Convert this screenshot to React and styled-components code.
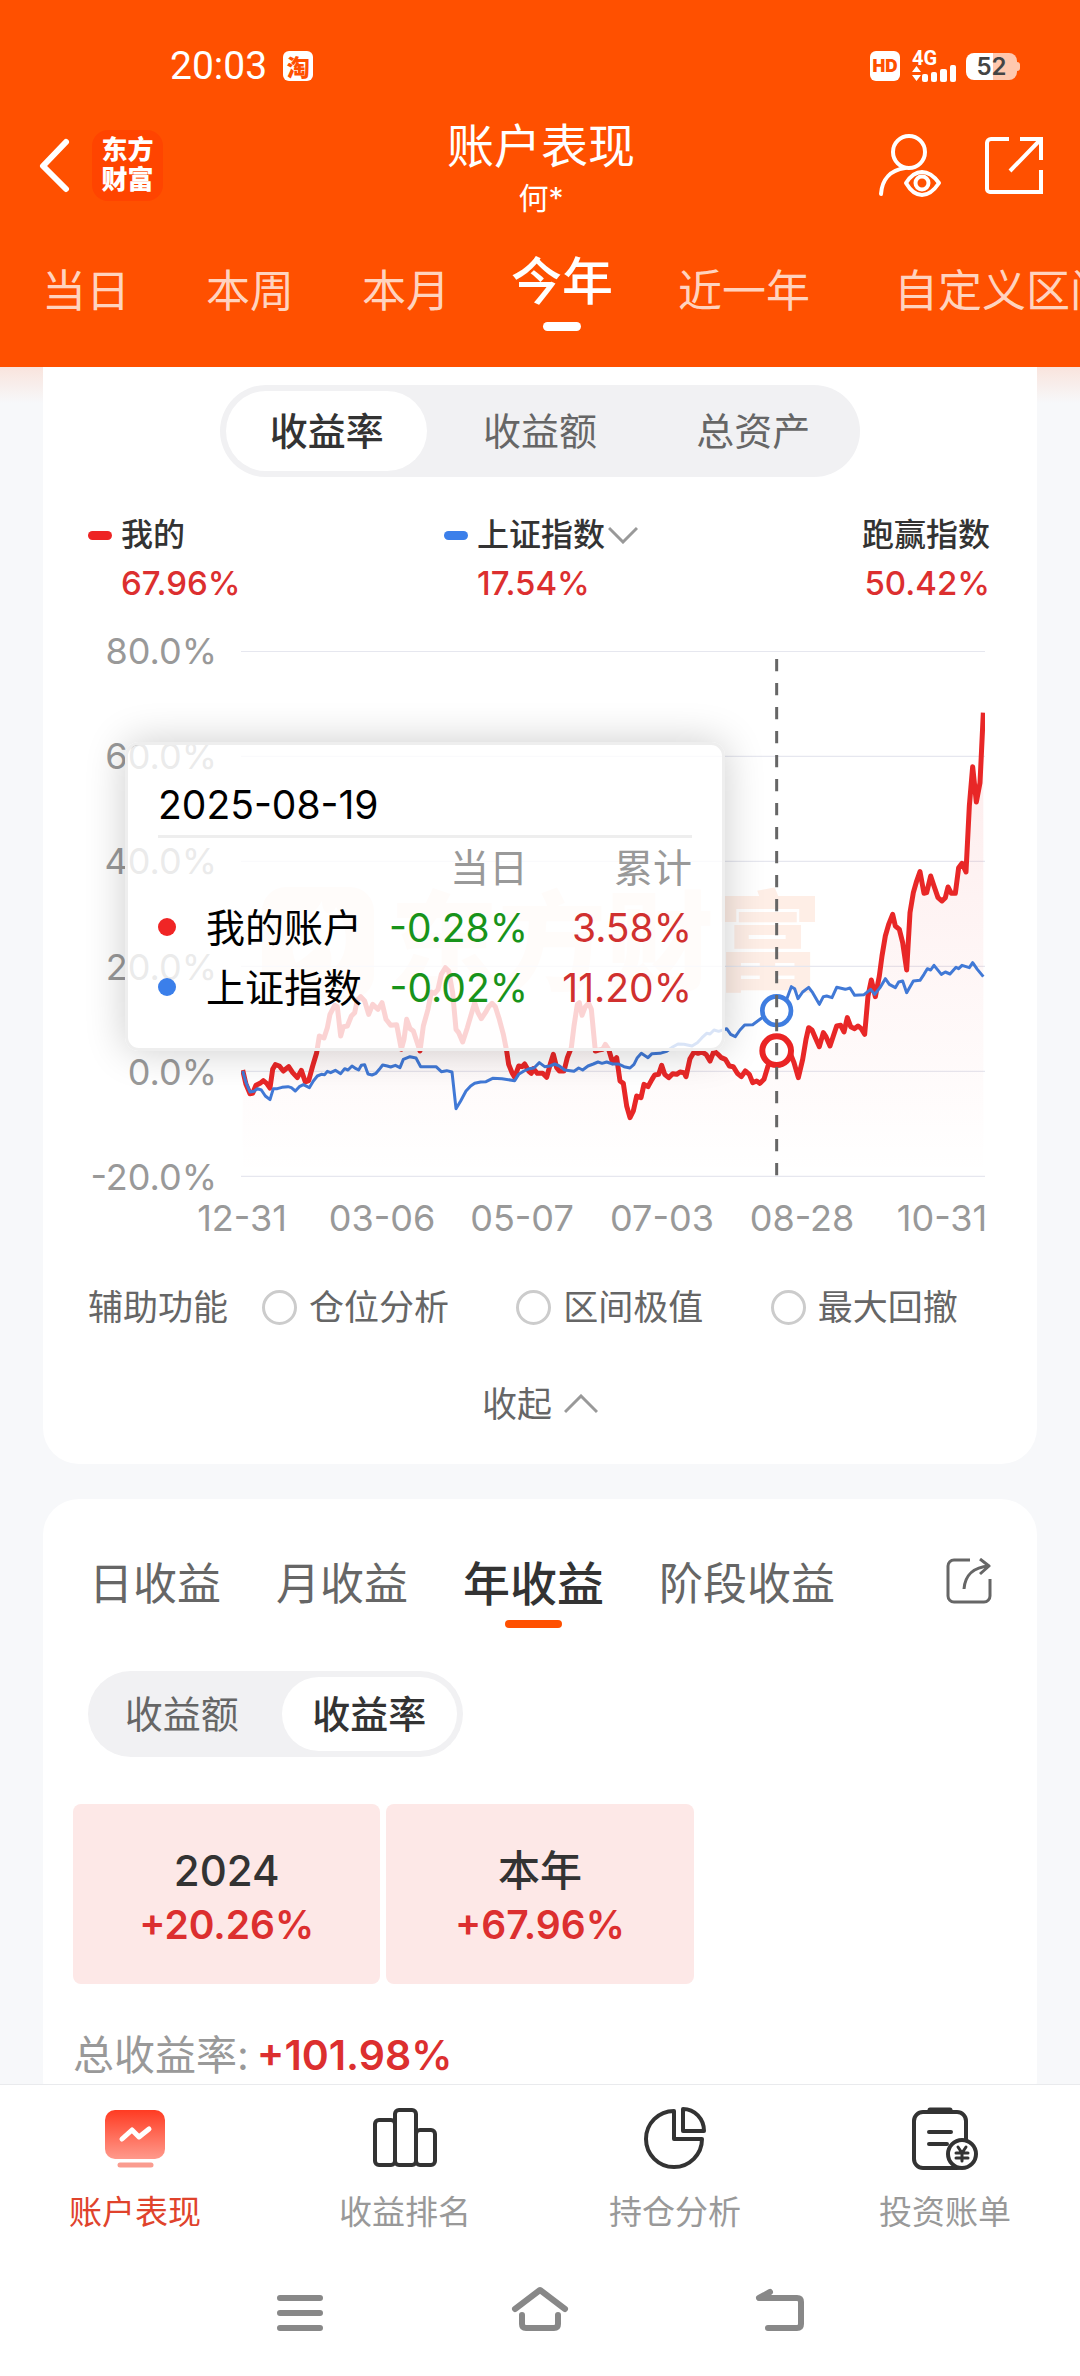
import { useState } from "react";
import styled, { createGlobalStyle } from "styled-components";

const RANGES = [
  { label: "当日", width: 172 },
  { label: "本周", width: 156 },
  { label: "本月", width: 156 },
  { label: "今年", width: 156 },
  { label: "近一年", width: 208 },
  { label: "自定义区间", width: 312 },
];

const Y_LABELS = ["80.0%", "60.0%", "40.0%", "20.0%", "0.0%", "-20.0%"];
const X_LABELS = ["12-31", "03-06", "05-07", "07-03", "08-28", "10-31"];
const HELPERS = ["仓位分析", "区间极值", "最大回撤"];
const PERIODS = ["日收益", "月收益", "年收益", "阶段收益"];
const YEARS = [
  { name: "2024", value: "+20.26%" },
  { name: "本年", value: "+67.96%" },
];

// chart units: three per pixel, 315 per 20%
const CHART_W = 2232;
const CHART_H = 1578;

const shift = (points, dx, dy) => points.map(([x, y]) => [x + dx, y + dy]);

const MINE_H1 = [
  [68, 452], [78, 495], [90, 523], [98, 522], [108, 498], [120, 492], [130, 484],
  [140, 492], [150, 506], [158, 450], [166, 436], [178, 440], [190, 455], [206, 442],
  [218, 460], [232, 475], [244, 453], [256, 488], [266, 484], [278, 440], [290, 400],
  [298, 350], [312, 356], [322, 325], [330, 285], [344, 258], [352, 262], [362, 350],
  [370, 322], [382, 320], [394, 290], [404, 280], [412, 242], [422, 232], [434, 245],
  [446, 285], [458, 255], [474, 270], [486, 250], [498, 300], [512, 318], [530, 316],
  [544, 390], [552, 360], [560, 300], [570, 328], [580, 335], [600, 395], [610, 320],
  [624, 270], [634, 218], [644, 222], [654, 210], [664, 165], [676, 145], [686, 155],
  [698, 220], [708, 330], [716, 340], [728, 368], [742, 325], [764, 250], [774, 280],
  [784, 298], [796, 280], [806, 262], [816, 252], [826, 262], [838, 300], [850, 345],
  [860, 395], [866, 435], [876, 460], [884, 474], [896, 440], [906, 442], [914, 434],
  [926, 455], [934, 462], [940, 448], [952, 462], [968, 462], [980, 474], [992, 430],
  [1000, 405], [1010, 445], [1018, 455], [1032, 455], [1042, 415], [1054, 385],
  [1062, 320], [1072, 255], [1078, 250], [1086, 288], [1096, 262], [1106, 252],
  [1114, 270], [1126, 395], [1136, 392], [1148, 390], [1156, 375], [1166, 390],
  [1178, 430], [1190, 415],
];
const MINE_H2 = [
  [180, 545], [190, 552], [200, 620], [210, 655], [220, 635], [230, 590], [243, 595],
  [252, 555], [264, 562], [276, 540], [284, 527], [296, 525], [305, 498], [314, 525],
  [326, 535], [338, 523], [350, 525], [360, 518], [372, 520], [378, 532], [390, 478],
  [402, 458], [414, 462], [426, 458], [438, 465], [450, 485], [462, 455], [474, 465],
  [484, 475], [496, 480], [508, 500], [520, 502], [532, 522], [544, 532], [556, 515],
  [568, 525], [578, 550], [590, 545], [600, 552], [612, 540], [624, 500], [650, 454],
  [690, 460], [702, 490], [715, 535], [728, 480], [738, 420], [746, 385], [756, 392],
  [766, 415], [778, 442], [790, 400], [798, 412], [810, 440], [820, 410], [830, 380],
  [842, 378], [852, 398], [862, 355], [872, 382], [884, 388], [894, 380], [904, 388],
  [914, 405], [924, 290], [934, 242], [946, 292], [958, 230], [966, 170], [976, 110],
  [986, 75], [998, 45], [1006, 80], [1018, 90], [1028, 130], [1040, 212], [1050, 40],
  [1060, -20], [1070, -55], [1080, -83], [1086, -50], [1092, -18], [1100, -20],
  [1112, -70], [1122, -40], [1134, -5], [1146, 5], [1156, -5], [1164, -37],
  [1174, -18], [1186, -18], [1196, -95], [1206, -108], [1218, -82], [1228, -280],
  [1238, -398], [1249, -292], [1260, -350], [1270, -560],
];
const INDEX_H1 = [
  [68, 455], [78, 490], [90, 518], [102, 516], [112, 508], [124, 512], [136, 530],
  [150, 541], [160, 508], [172, 508], [186, 504], [204, 502], [214, 505], [226, 515],
  [238, 502], [250, 496], [268, 505], [280, 485], [292, 470], [304, 465], [314, 466],
  [322, 456], [332, 460], [346, 453], [362, 463], [374, 448], [384, 452], [396, 440],
  [408, 448], [416, 452], [424, 438], [434, 436], [444, 464], [456, 467], [468, 462],
  [478, 450], [488, 437], [502, 440], [512, 443], [526, 438], [540, 445], [550, 420],
  [570, 412], [588, 416], [602, 442], [622, 442], [648, 442], [664, 457], [680, 454],
  [696, 458], [708, 568], [722, 545], [738, 515], [752, 500], [764, 492], [782, 488],
  [798, 487], [818, 477], [846, 478], [884, 484], [896, 465], [912, 455], [928, 448],
  [942, 446], [958, 430], [974, 442], [990, 440], [1004, 434], [1018, 440],
  [1034, 452], [1062, 456], [1076, 446], [1088, 452], [1104, 440], [1120, 434],
  [1134, 428], [1146, 432], [1160, 428], [1178, 434], [1196, 434], [1212, 442],
];
const INDEX_H2 = [
  [210, 506], [222, 495], [232, 475], [244, 462], [264, 475], [276, 463], [300, 462],
  [320, 456], [338, 443], [354, 434], [372, 435], [396, 440], [412, 430], [426, 415],
  [440, 402], [450, 404], [462, 392], [476, 396], [500, 388], [512, 405], [526, 412],
  [540, 392], [554, 377], [578, 376], [600, 360], [620, 345], [650, 334], [680, 300],
  [694, 262], [704, 268], [714, 298], [728, 278], [746, 264], [758, 280], [778, 315],
  [790, 292], [800, 290], [816, 295], [830, 264], [856, 270], [870, 266], [884, 288],
  [912, 286], [932, 270], [944, 285], [960, 265], [976, 238], [988, 255], [1006, 265],
  [1016, 248], [1028, 245], [1040, 280], [1060, 245], [1080, 243], [1092, 225],
  [1102, 208], [1112, 212], [1122, 198], [1144, 225], [1156, 218], [1170, 224],
  [1188, 204], [1196, 208], [1206, 198], [1228, 205], [1238, 190], [1252, 210],
  [1270, 232],
];

const mine = [...shift(MINE_H1, -63, 805), ...shift(MINE_H2, 957, 745)];
const index = [...shift(INDEX_H1, -63, 805), ...shift(INDEX_H2, 957, 745)];
const toPoints = (points) => points.map((p) => p.join(",")).join(" ");

const ReturnsChart = () => (
  <ChartSvg
    viewBox={`0 0 ${CHART_W} ${CHART_H}`}
    preserveAspectRatio="none"
    role="img"
    aria-label="收益率"
  >
    <defs>
      <linearGradient id="area" x1="0" y1="0" x2="0" y2="1">
        <stop offset="0" stopColor="#ee2222" stopOpacity="0.09" />
        <stop offset="1" stopColor="#ee2222" stopOpacity="0" />
      </linearGradient>
    </defs>
    {Y_LABELS.map((label, i) => (
      <line key={label} x1="0" x2={CHART_W} y1={i * 315 + 1} y2={i * 315 + 1} stroke="#e6e7ef" strokeWidth="4" />
    ))}
    <polygon points={`5,${CHART_H} ${toPoints(mine)} 2227,${CHART_H}`} fill="url(#area)" />
    <g fill="none" strokeLinejoin="round">
      <polyline points={toPoints(mine)} stroke="#e82727" strokeWidth="15" />
      <polyline points={toPoints(index)} stroke="#4179d6" strokeWidth="9" />
    </g>
    <circle cx="1607" cy="1079" r="43" fill="#fff" stroke="#3f7de0" strokeWidth="14" />
    <circle cx="1607" cy="1199" r="43" fill="#fff" stroke="#ea2424" strokeWidth="18" />
    <line x1="1607" x2="1607" y1="24" y2="1575" stroke="#666" strokeWidth="9" strokeDasharray="37 35" />
  </ChartSvg>
);

const Segmented = ({ options, value, onChange, width, height }) => (
  <SegmentedBox $width={width} $height={height}>
    {options.map((option) => (
      <Segment key={option} type="button" $active={option === value} onClick={() => onChange(option)}>
        {option}
      </Segment>
    ))}
  </SegmentedBox>
);

const App = () => {
  const [range, setRange] = useState("今年");
  const [metric, setMetric] = useState("收益率");
  const [period, setPeriod] = useState("年收益");
  const [yearMetric, setYearMetric] = useState("收益率");

  return (
    <Page>
      <GlobalStyle />
      <Header>
        <StatusBar>
          <Clock>20:03</Clock>
          <Badge $size={23}>淘</Badge>
          <StatusRight>
            <Badge $size={17}>HD</Badge>
            <Signal>
              <span>4G</span>
              <svg width="44" height="17" viewBox="0 0 44 17" fill="#fff">
                <path d="M0 7l4.500-6L9 7zM0 10h9l-4.500 6z" />
                <rect x="10" y="9" width="6" height="8" rx="2" />
                <rect x="19" y="7" width="6" height="10" rx="2" />
                <rect x="28" y="4" width="7" height="13" rx="2" />
                <rect x="38" y="0" width="6" height="17" rx="2" />
              </svg>
            </Signal>
            <Battery>52</Battery>
          </StatusRight>
        </StatusBar>

        <TitleBar>
          <TitleSide>
            <IconButton type="button" aria-label="返回">
              <svg width="32" height="56" viewBox="0 0 32 56" fill="none" stroke="#fff" strokeWidth="6" strokeLinecap="round" strokeLinejoin="round">
                <path d="M28 5L5 29l23 23" />
              </svg>
            </IconButton>
            <Logo>
              东方
              <br />
              财富
            </Logo>
          </TitleSide>
          <Titles>
            <h1>账户表现</h1>
            <p>何*</p>
          </Titles>
          <TitleSide $end>
            <IconButton type="button" aria-label="账户查看">
              <svg width="64" height="66" viewBox="0 0 64 66" fill="none" stroke="#fff" strokeWidth="4" strokeLinecap="round">
                <circle cx="31" cy="20" r="16" />
                <path d="M3 62C4 47 13 38 27 36" />
                <path d="M28 51q7-11 16-11t17 11q-8 12-17 12t-16-12z" strokeLinejoin="round" />
                <circle cx="44" cy="51" r="6.500" />
              </svg>
            </IconButton>
            <IconButton type="button" aria-label="分享">
              <svg width="60" height="62" viewBox="0 0 60 62" fill="none" stroke="#fff" strokeWidth="4">
                <path d="M25 5H7a4 4 0 0 0-4 4v46a3 3 0 0 0 3 3h51V36M36 5h21v21M57 5L26 37" />
              </svg>
            </IconButton>
          </TitleSide>
        </TitleBar>

        <RangeTabs>
          {RANGES.map(({ label, width }) => (
            <RangeTab key={label} type="button" $width={width} $active={label === range} onClick={() => setRange(label)}>
              {label}
            </RangeTab>
          ))}
        </RangeTabs>
      </Header>

      <Content>
        <ChartCard>
          <Segmented options={["收益率", "收益额", "总资产"]} value={metric} onChange={setMetric} width={640} height={92} />

          <Legend>
            <LegendItem>
              <LegendName>
                <Marker $color="#ee2424" />
                我的
              </LegendName>
              <LegendValue $indent>67.96%</LegendValue>
            </LegendItem>
            <LegendItem>
              <LegendName>
                <Marker $color="#3b7fea" />
                <IndexSelect aria-label="对比指数" defaultValue="上证指数">
                  <option>上证指数</option>
                </IndexSelect>
                <svg width="30" height="18" viewBox="0 0 30 18" fill="none" stroke="#999" strokeWidth="3">
                  <path d="M1 2l14 14L29 2" />
                </svg>
              </LegendName>
              <LegendValue $indent>17.54%</LegendValue>
            </LegendItem>
            <LegendItem $end>
              <LegendName>跑赢指数</LegendName>
              <LegendValue>50.42%</LegendValue>
            </LegendItem>
          </Legend>

          <ChartRow>
            <YAxis>
              {Y_LABELS.map((label) => (
                <span key={label}>{label}</span>
              ))}
            </YAxis>
            <Plot>
              <Watermark aria-hidden="true">
                <svg width="112" height="112" viewBox="0 0 112 112">
                  <rect width="112" height="112" rx="24" fill="currentColor" />
                  <path d="M34 76C22 44 44 40 60 14c0 14 10 16 14 6 14 22 14 52-6 64 4-14 0-24-6-30-10 8-20 18-28 22z" fill="#fff" />
                </svg>
                东方财富
              </Watermark>
              <ReturnsChart />
            </Plot>
            <Tooltip>
              <table>
                <caption>2025-08-19</caption>
                <thead>
                  <tr>
                    <th aria-label="名称" />
                    <th>当日</th>
                    <th>累计</th>
                  </tr>
                </thead>
                <tbody>
                  <tr>
                    <NameCell $color="#f02525">我的账户</NameCell>
                    <ValueCell $color="#18931a">-0.28%</ValueCell>
                    <ValueCell $color="#d0302f">3.58%</ValueCell>
                  </tr>
                  <tr>
                    <NameCell $color="#3b7fea">上证指数</NameCell>
                    <ValueCell $color="#18931a">-0.02%</ValueCell>
                    <ValueCell $color="#d0302f">11.20%</ValueCell>
                  </tr>
                </tbody>
              </table>
            </Tooltip>
          </ChartRow>
          <XAxis>
            {X_LABELS.map((label) => (
              <span key={label}>{label}</span>
            ))}
          </XAxis>

          <HelperRow>
            <span>辅助功能</span>
            <HelperOptions>
              {HELPERS.map((label) => (
                <HelperLabel key={label}>
                  <input type="radio" name="helper" />
                  {label}
                </HelperLabel>
              ))}
            </HelperOptions>
          </HelperRow>

          <Collapse type="button">
            收起
            <svg width="34" height="20" viewBox="0 0 34 20" fill="none" stroke="#999" strokeWidth="3">
              <path d="M1 18L17 2l16 16" />
            </svg>
          </Collapse>
        </ChartCard>

        <YearCard>
          <PeriodBar>
            {PERIODS.map((label) => (
              <PeriodTab key={label} type="button" $active={label === period} onClick={() => setPeriod(label)}>
                {label}
              </PeriodTab>
            ))}
            <ShareButton type="button" aria-label="分享收益">
              <svg width="46" height="46" viewBox="0 0 46 46" fill="none" stroke="#666" strokeWidth="3">
                <path d="M24 2H8a6 6 0 0 0-6 6v30a6 6 0 0 0 6 6h30a6 6 0 0 0 6-6V21" />
                <path d="M18 31C19 17 28 9 43 8M34 1l9 7-9 8" strokeLinejoin="round" />
              </svg>
            </ShareButton>
          </PeriodBar>
          <YearSwitch>
            <Segmented options={["收益额", "收益率"]} value={yearMetric} onChange={setYearMetric} width={375} height={86} />
          </YearSwitch>
          <YearGrid>
            {YEARS.map(({ name, value }) => (
              <YearBox key={name}>
                <strong>{name}</strong>
                <em>{value}</em>
              </YearBox>
            ))}
          </YearGrid>
          <Total>
            总收益率:<em>+101.98%</em>
          </Total>
        </YearCard>
      </Content>

      <TabBar>
        <TabLink href="#performance" $active>
          <svg width="62" height="64" viewBox="0 0 62 64" fill="none">
            <defs>
              <linearGradient id="tab" x1="0" y1="0" x2="0" y2="1">
                <stop offset="0" stopColor="#ff3b22" />
                <stop offset="1" stopColor="#ff9a8c" />
              </linearGradient>
            </defs>
            <rect x="1" y="3" width="60" height="49" rx="10" fill="url(#tab)" />
            <path d="M18 32l10-9 7 7 10-8" stroke="#fff" strokeWidth="5" strokeLinecap="round" strokeLinejoin="round" />
            <path d="M16 58h31" stroke="#fa9c8f" strokeWidth="5" strokeLinecap="round" />
          </svg>
          账户表现
        </TabLink>
        <TabLink href="#ranking">
          <svg width="66" height="64" viewBox="0 0 66 64" fill="none" stroke="#333" strokeWidth="4">
            <rect x="3" y="13" width="20" height="45" rx="4" />
            <rect x="23" y="3" width="21" height="55" rx="4" />
            <rect x="44" y="23" width="19" height="35" rx="4" />
          </svg>
          收益排名
        </TabLink>
        <TabLink href="#positions">
          <svg width="62" height="64" viewBox="0 0 62 64" fill="none" stroke="#333" strokeWidth="4" strokeLinejoin="round">
            <path d="M30 4v28h28A28 28 0 1 1 30 4z" />
            <path d="M39 2v22h21A21 22 0 0 0 39 2z" />
          </svg>
          持仓分析
        </TabLink>
        <TabLink href="#bills">
          <svg width="68" height="64" viewBox="0 0 68 64" fill="none" stroke="#333" strokeWidth="4" strokeLinecap="round" strokeLinejoin="round">
            <rect x="3" y="5" width="52" height="56" rx="9" />
            <path d="M19 3h20" strokeWidth="5" />
            <path d="M18 25h22M18 37h18" />
            <circle cx="51" cy="47" r="14" fill="#fff" />
            <path d="M47 40l4 6 4-6M51 46v8M45 46h12M45 51h12" strokeWidth="3" />
          </svg>
          投资账单
        </TabLink>
      </TabBar>

      <SystemNav>
        <IconButton type="button" aria-label="最近任务">
          <svg width="58" height="50" viewBox="0 0 58 50" fill="none" stroke="#888" strokeWidth="6" strokeLinecap="round">
            <path d="M9 13h40M9 28h40M9 43h40" />
          </svg>
        </IconButton>
        <IconButton type="button" aria-label="主屏幕">
          <svg width="58" height="50" viewBox="0 0 58 50" fill="none" stroke="#888" strokeWidth="6" strokeLinecap="round">
            <path d="M4 24L29 5l25 19" strokeLinejoin="round" />
            <path d="M11 30v9q0 4 4 4h28q4 0 4-4v-9" />
          </svg>
        </IconButton>
        <IconButton type="button" aria-label="后退">
          <svg width="58" height="50" viewBox="0 0 58 50" fill="none" stroke="#888" strokeWidth="6" strokeLinecap="round" strokeLinejoin="round">
            <path d="M19 7L8 13h38q4 0 4 4v22q0 4-4 4H17" />
          </svg>
        </IconButton>
      </SystemNav>
    </Page>
  );
};

export default App;

const GlobalStyle = createGlobalStyle`
  :root {
    --orange: #ff5000;
    --red: #dc2f2f;
    --text: #333333;
    --muted: #666666;
    --light: #999999;
  }

  * {
    box-sizing: border-box;
  }

  body, h1, p {
    margin: 0;
  }

  body, button, select, input {
    font-family: Inter, "Noto Sans CJK SC", sans-serif;
  }

  button {
    border: 0;
    padding: 0;
    background: none;
    color: inherit;
  }

  em, strong {
    font-style: normal;
    font-weight: 500;
  }

  svg {
    display: block;
    flex-shrink: 0;
  }
`;

const Page = styled.div`
  display: flex;
  flex-direction: column;
  height: 100vh;
  overflow: hidden;
  background: #ffffff;
  color: var(--text);
`;

const Header = styled.header`
  flex-shrink: 0;
  overflow: hidden;
  background: var(--orange);
  color: #ffffff;
`;

const StatusBar = styled.div`
  display: flex;
  align-items: center;
  height: 52px;
  margin-top: 40px;
  padding: 0 60px 0 170px;
`;

const Clock = styled.span`
  margin-right: 16px;
  font-family: Roboto, sans-serif;
  font-size: 39px;
`;

const Badge = styled.span`
  display: flex;
  align-items: center;
  justify-content: center;
  width: 30px;
  height: 30px;
  border-radius: 6px;
  background: #ffffff;
  color: var(--orange);
  font-size: ${(p) => p.$size}px;
  font-weight: 900;
`;

const StatusRight = styled.div`
  display: flex;
  align-items: center;
  margin-left: auto;
`;

const Signal = styled.div`
  margin: 0 10px 0 12px;

  span {
    display: block;
    font-family: Roboto, sans-serif;
    font-size: 20px;
    font-weight: 700;
    line-height: 14px;
  }
`;

const Battery = styled.span`
  width: 51px;
  margin-right: 3px;
  border-radius: 8px;
  background: linear-gradient(90deg, #ffffff 52%, #ffc8ae 52%);
  color: #444444;
  font-size: 24px;
  font-weight: 600;
  line-height: 27px;
  text-align: center;
  position: relative;

  &::after {
    content: "";
    position: absolute;
    top: 9px;
    right: -3px;
    width: 3px;
    height: 9px;
    border-radius: 0 3px 3px 0;
    background: #ffc8ae;
  }
`;

const TitleBar = styled.div`
  display: grid;
  grid-template-columns: 1fr auto 1fr;
  margin-top: 26px;
  padding: 0 36px 0 38px;
`;

const TitleSide = styled.div`
  display: flex;
  align-items: center;
  justify-content: ${(p) => (p.$end ? "flex-end" : "flex-start")};
  gap: ${(p) => (p.$end ? 42 : 22)}px;
  height: 94px;
`;

const IconButton = styled.button`
  display: flex;
  align-items: center;
  justify-content: center;
`;

const Logo = styled.div`
  width: 71px;
  height: 71px;
  padding-top: 5px;
  border-radius: 16px;
  background: #ff4400;
  font-size: 26px;
  font-weight: 900;
  line-height: 30px;
  text-align: center;
`;

const Titles = styled.div`
  text-align: center;

  h1 {
    font-size: 47px;
    font-weight: 400;
    line-height: 56px;
  }

  p {
    font-size: 30px;
    line-height: 48px;
  }
`;

const RangeTabs = styled.nav`
  display: flex;
  align-items: flex-end;
  padding: 30px 0 36px;
`;

const RangeTab = styled.button`
  flex: 0 0 ${(p) => p.$width}px;
  color: ${(p) => (p.$active ? "#ffffff" : "#ffd3bf")};
  font-size: ${(p) => (p.$active ? 51 : 44)}px;
  font-weight: ${(p) => (p.$active ? 500 : 400)};
  line-height: 60px;
  padding-bottom: ${(p) => (p.$active ? 0 : 10)}px;
  white-space: nowrap;

  &::after {
    content: "";
    display: ${(p) => (p.$active ? "block" : "none")};
    width: 38px;
    height: 9px;
    margin: 10px auto 0;
    border-radius: 5px;
    background: #ffffff;
  }
`;

const Content = styled.main`
  flex: 1;
  min-height: 0;
  overflow-y: auto;
  scrollbar-width: none;
  padding: 0 43px;
  background: linear-gradient(#f9e4dd, #f7f8fa 36px);
`;

const ChartCard = styled.section`
  padding: 18px 0 36px;
  border-radius: 0 0 36px 36px;
  background: #ffffff;
`;

const SegmentedBox = styled.div`
  display: flex;
  gap: 12px;
  width: ${(p) => p.$width}px;
  max-width: 100%;
  height: ${(p) => p.$height}px;
  margin: 0 auto;
  padding: 6px;
  border-radius: 46px;
  background: #f1f1f3;
`;

const Segment = styled.button`
  flex: 1;
  border-radius: 40px;
  background: ${(p) => (p.$active ? "#ffffff" : "transparent")};
  color: ${(p) => (p.$active ? "var(--text)" : "var(--muted)")};
  font-size: 38px;
  font-weight: ${(p) => (p.$active ? 500 : 400)};
  line-height: 48px;
`;

const Legend = styled.div`
  display: grid;
  grid-template-columns: 356px 1fr auto;
  margin-top: 34px;
  padding: 0 47px 0 45px;
`;

const LegendItem = styled.div`
  text-align: ${(p) => (p.$end ? "right" : "left")};
`;

const LegendName = styled.div`
  display: flex;
  align-items: center;
  font-size: 32px;
  font-weight: 500;
  line-height: 48px;
`;

const Marker = styled.i`
  width: 24px;
  height: 9px;
  margin-right: 9px;
  border-radius: 5px;
  background: ${(p) => p.$color};
`;

const IndexSelect = styled.select`
  appearance: none;
  margin: 0 2px 0 0;
  padding: 0;
  border: 0;
  background: none;
  color: inherit;
  font-size: 32px;
  font-weight: 500;
  line-height: 48px;
`;

const LegendValue = styled.div`
  padding-left: ${(p) => (p.$indent ? 33 : 0)}px;
  color: var(--red);
  font-size: 33px;
  font-weight: 500;
  line-height: 48px;
`;

const ChartRow = styled.div`
  display: flex;
  gap: 24px;
  margin-top: 26px;
  padding: 0 52px 0 45px;
  position: relative;
`;

const YAxis = styled.div`
  display: flex;
  flex-direction: column;
  justify-content: space-between;
  width: 129px;
  height: 562px;
  color: var(--light);
  font-size: 36px;
  line-height: 36px;
  text-align: right;

  span {
    align-self: flex-end;
    white-space: nowrap;
  }
`;

const Plot = styled.div`
  flex: 1;
  padding: 18px 0;
  position: relative;
`;

const ChartSvg = styled.svg`
  width: 100%;
  height: 526px;
  position: relative;
`;

const Watermark = styled.div`
  display: flex;
  align-items: center;
  gap: 16px;
  position: absolute;
  top: 254px;
  left: 21px;
  color: #feeee6;
  font-size: 108px;
  font-weight: 900;
  line-height: 112px;
  white-space: nowrap;
`;

const Tooltip = styled.div`
  position: absolute;
  top: 109px;
  left: 82px;
  width: 600px;
  padding: 30px;
  border: 3px solid #eeeeee;
  border-radius: 14px;
  background: rgba(255, 255, 255, 0.8);
  background-clip: padding-box;
  box-shadow: 0 0 40px rgba(0, 0, 0, 0.2);
  font-size: 39px;
  line-height: 60px;

  table {
    width: 100%;
    border-collapse: collapse;
    table-layout: fixed;
  }

  caption {
    border-bottom: 3px solid #eeeeee;
    color: #000000;
    font-size: 39px;
    text-align: left;
  }

  th {
    padding: 0;
    color: var(--light);
    font-weight: 400;
    text-align: right;
  }

  th:nth-child(1) {
    width: 206px;
  }
`;

const NameCell = styled.td`
  padding: 0;
  color: #000000;
  white-space: nowrap;

  &::before {
    content: "";
    display: inline-block;
    width: 18px;
    height: 18px;
    margin-right: 30px;
    border-radius: 50%;
    background: ${(p) => p.$color};
    vertical-align: 6px;
  }
`;

const ValueCell = styled.td`
  padding: 0;
  color: ${(p) => p.$color};
  text-align: right;
`;

const XAxis = styled.div`
  display: grid;
  grid-template-columns: repeat(6, 1fr);
  margin: 0 25px 0 129px;
  color: var(--light);
  font-size: 36px;
  line-height: 46px;
  text-align: center;
`;

const HelperRow = styled.div`
  display: flex;
  gap: 34px;
  margin-top: 42px;
  padding: 0 12px 0 45px;
  color: var(--muted);
  font-size: 35px;
  line-height: 48px;
`;

const HelperOptions = styled.div`
  display: grid;
  grid-template-columns: repeat(3, 1fr);
  flex: 1;
`;

const HelperLabel = styled.label`
  display: flex;
  align-items: center;
  gap: 12px;

  input {
    appearance: none;
    width: 35px;
    height: 35px;
    margin: 0;
    border: 3px solid #cccccc;
    border-radius: 50%;
  }
`;

const Collapse = styled.button`
  display: flex;
  align-items: center;
  gap: 12px;
  margin: 49px auto 0;
  color: var(--muted);
  font-size: 35px;
  line-height: 48px;
`;

const YearCard = styled.section`
  margin-top: 35px;
  padding: 55px 30px 30px;
  border-radius: 36px;
  background: #ffffff;
`;

const PeriodBar = styled.div`
  display: flex;
  align-items: flex-start;
  gap: 55px;
  padding: 0 15px 0 16px;
`;

const PeriodTab = styled.button`
  color: ${(p) => (p.$active ? "var(--text)" : "var(--muted)")};
  font-size: ${(p) => (p.$active ? 47 : 44)}px;
  font-weight: ${(p) => (p.$active ? 500 : 400)};
  line-height: 60px;

  &::after {
    content: "";
    display: block;
    width: 57px;
    height: 8px;
    margin: 6px auto 0;
    border-radius: 4px;
    background: ${(p) => (p.$active ? "var(--orange)" : "transparent")};
  }
`;

const ShareButton = styled.button`
  display: flex;
  align-items: center;
  height: 54px;
  margin-left: auto;
`;

const YearSwitch = styled.div`
  display: flex;
  margin-top: 43px;
  padding-left: 15px;

  ${SegmentedBox} {
    margin: 0;
  }
`;

const YearGrid = styled.div`
  display: grid;
  grid-template-columns: repeat(3, 1fr);
  gap: 6px;
  margin-top: 47px;
`;

const YearBox = styled.div`
  display: flex;
  flex-direction: column;
  align-items: center;
  padding: 40px 0 32px;
  border-radius: 8px;
  background: #fde8e7;
  line-height: 54px;

  strong {
    font-size: 42px;
  }

  em {
    color: var(--red);
    font-size: 39px;
    font-weight: 600;
  }
`;

const Total = styled.p`
  margin-top: 41px;
  color: var(--light);
  font-size: 41px;
  line-height: 60px;

  em {
    margin-left: 8px;
    color: var(--red);
    font-weight: 600;
  }
`;

const TabBar = styled.nav`
  display: flex;
  flex-shrink: 0;
  padding-top: 22px;
  border-top: 1px solid #e9eaed;
`;

const TabLink = styled.a`
  display: flex;
  flex: 1;
  flex-direction: column;
  align-items: center;
  gap: 18px;
  color: ${(p) => (p.$active ? "#e0432c" : "var(--light)")};
  font-size: 33px;
  line-height: 46px;
  text-decoration: none;
`;

const SystemNav = styled.nav`
  display: flex;
  flex-shrink: 0;
  justify-content: center;
  gap: 182px;
  padding: 50px 0 41px;
`;
